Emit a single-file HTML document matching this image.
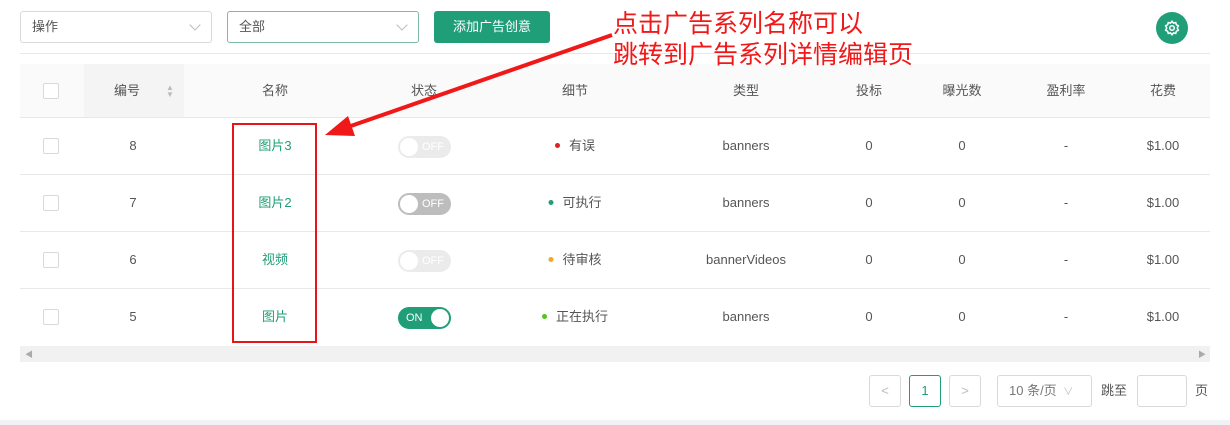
<!DOCTYPE html>
<html><head><meta charset="utf-8"><style>
*{box-sizing:border-box;margin:0;padding:0}
body{width:1230px;height:425px;background:#fff;font-family:"Liberation Sans","Noto Sans CJK SC",sans-serif;font-size:13px;color:#555;position:relative;overflow:hidden}
.a{position:absolute}
.sel{position:absolute;top:11px;height:32px;border:1px solid #d9d9d9;border-radius:3px;padding:0 11px;line-height:30px;font-size:13px;color:#555}
.sel i{position:absolute;right:12px;top:9px;width:8px;height:8px;border-right:1px solid #bbb;border-bottom:1px solid #bbb;transform:rotate(45deg)}
.c{position:absolute;text-align:center;transform:translateX(-50%);white-space:nowrap;line-height:18px;height:18px}
.cb{position:absolute;left:43px;width:16px;height:16px;border:1px solid #d9d9d9;border-radius:2px;background:#fff}
.line{position:absolute;left:20px;width:1190px;height:1px;background:#e8e8e8}
.sw{position:absolute;left:398px;width:53px;height:22px;border-radius:11px;color:#fff;font-size:11px;line-height:22px}
.sw b{position:absolute;top:2px;width:18px;height:18px;border-radius:50%;background:#fff}
.dot{display:inline-block;width:5px;height:5px;border-radius:50%;margin-right:9px;vertical-align:middle;position:relative;top:-1px}
.pg{position:absolute;top:375px;height:32px;border:1px solid #d9d9d9;border-radius:3px;text-align:center;line-height:30px;color:#bbb}
</style></head><body>
<div class="sel" style="left:20px;width:192px">操作<i></i></div>
<div class="sel" style="left:227px;width:192px;border-color:#7fb9a8">全部<i></i></div>
<div class="a" style="left:434px;top:11px;width:116px;height:32px;background:#1f9e77;border-radius:3px;color:#fff;line-height:32px;text-align:center;font-size:13px">添加广告创意</div>
<div class="a" style="left:1156px;top:12px;width:32px;height:32px;border-radius:50%;background:#1f9e77"></div>
<svg class="a" style="left:1163px;top:19px" width="18" height="18" viewBox="0 0 24 24" fill="none" stroke="#fff" stroke-width="2"><circle cx="12" cy="12" r="3"/><path d="M12 3l2 2.5 3-.8.8 3L20.5 9 19 12l1.5 3-2.7 1.3-.8 3-3-.8L12 21l-2-2.5-3 .8-.8-3L3.5 15 5 12 3.5 9l2.7-1.3.8-3 3 .8z"/></svg>
<div class="line" style="top:53px"></div>
<div class="a" style="left:20px;top:64px;width:1190px;height:54px;background:#fafafa"></div>
<div class="a" style="left:84px;top:64px;width:100px;height:54px;background:#f4f4f4"></div>
<div class="cb" style="top:83px"></div>
<div class="c" style="left:127px;top:82px">编号</div>
<div class="a" style="left:166px;top:84px;font-size:8px;color:#bbb;line-height:7px">▲<br>▼</div>
<div class="c" style="left:275px;top:82px">名称</div>
<div class="c" style="left:424px;top:82px">状态</div>
<div class="c" style="left:575px;top:82px">细节</div>
<div class="c" style="left:746px;top:82px">类型</div>
<div class="c" style="left:869px;top:82px">投标</div>
<div class="c" style="left:962px;top:82px">曝光数</div>
<div class="c" style="left:1066px;top:82px">盈利率</div>
<div class="c" style="left:1163px;top:82px">花费</div>
<div class="line" style="top:117px"></div>
<div class="line" style="top:174px"></div>
<div class="line" style="top:231px"></div>
<div class="line" style="top:288px"></div>

<div class="cb" style="top:138px"></div><div class="c" style="left:133px;top:137px">8</div>
<div class="c" style="left:275px;top:137px;color:#1f9e77">图片3</div>
<div class="sw" style="top:136px;background:#ebebeb"><b style="left:2px"></b><span style="position:absolute;left:24px">OFF</span></div>
<div class="c" style="left:575px;top:137px"><span class="dot" style="background:#e02020"></span>有误</div>
<div class="c" style="left:746px;top:137px">banners</div><div class="c" style="left:869px;top:137px">0</div><div class="c" style="left:962px;top:137px">0</div><div class="c" style="left:1066px;top:137px">-</div><div class="c" style="left:1163px;top:137px">$1.00</div>

<div class="cb" style="top:195px"></div><div class="c" style="left:133px;top:194px">7</div>
<div class="c" style="left:275px;top:194px;color:#1f9e77">图片2</div>
<div class="sw" style="top:193px;background:#bdbdbd"><b style="left:2px"></b><span style="position:absolute;left:24px">OFF</span></div>
<div class="c" style="left:575px;top:194px"><span class="dot" style="background:#1f9e77"></span>可执行</div>
<div class="c" style="left:746px;top:194px">banners</div><div class="c" style="left:869px;top:194px">0</div><div class="c" style="left:962px;top:194px">0</div><div class="c" style="left:1066px;top:194px">-</div><div class="c" style="left:1163px;top:194px">$1.00</div>

<div class="cb" style="top:252px"></div><div class="c" style="left:133px;top:251px">6</div>
<div class="c" style="left:275px;top:251px;color:#1f9e77">视频</div>
<div class="sw" style="top:250px;background:#ebebeb"><b style="left:2px"></b><span style="position:absolute;left:24px">OFF</span></div>
<div class="c" style="left:575px;top:251px"><span class="dot" style="background:#f5a623"></span>待审核</div>
<div class="c" style="left:746px;top:251px">bannerVideos</div><div class="c" style="left:869px;top:251px">0</div><div class="c" style="left:962px;top:251px">0</div><div class="c" style="left:1066px;top:251px">-</div><div class="c" style="left:1163px;top:251px">$1.00</div>

<div class="cb" style="top:309px"></div><div class="c" style="left:133px;top:308px">5</div>
<div class="c" style="left:275px;top:308px;color:#1f9e77">图片</div>
<div class="sw" style="top:307px;background:#1f9e77"><b style="left:33px"></b><span style="position:absolute;left:8px">ON</span></div>
<div class="c" style="left:575px;top:308px"><span class="dot" style="background:#52c41a"></span>正在执行</div>
<div class="c" style="left:746px;top:308px">banners</div><div class="c" style="left:869px;top:308px">0</div><div class="c" style="left:962px;top:308px">0</div><div class="c" style="left:1066px;top:308px">-</div><div class="c" style="left:1163px;top:308px">$1.00</div>

<div class="a" style="left:20px;top:346px;width:1190px;height:16px;background:#f1f1f1"></div>
<div class="a" style="left:25px;top:349px;font-size:8px;color:#aaa">◀</div>
<div class="a" style="left:1198px;top:349px;font-size:8px;color:#aaa">▶</div>

<div class="pg" style="left:869px;width:32px">&lt;</div>
<div class="pg" style="left:909px;width:32px;border-color:#1f9e77;color:#1f9e77">1</div>
<div class="pg" style="left:949px;width:32px">&gt;</div>
<div class="pg" style="left:997px;width:95px;color:#777;text-align:left;padding-left:11px">10 条/页 <span style="color:#bbb;font-size:10px;margin-left:3px">∨</span></div>
<div class="a" style="left:1101px;top:382px;line-height:18px">跳至</div>
<div class="pg" style="left:1137px;width:50px"></div>
<div class="a" style="left:1195px;top:382px;line-height:18px">页</div>
<div class="a" style="left:0;top:420px;width:1230px;height:5px;background:#f0f2f5"></div>

<div class="a" style="left:232px;top:123px;width:85px;height:220px;border:2px solid #e8141a"></div>
<svg class="a" style="left:0;top:0" width="1230" height="425"><line x1="612" y1="35" x2="345" y2="128" stroke="#f01818" stroke-width="4"/><polygon points="325,135 348,116 355,136" fill="#f01818"/></svg>
<div class="a" style="left:613px;top:7px;font-size:25px;line-height:31px;color:#f01818;font-family:'Noto Sans CJK SC',sans-serif">点击广告系列名称可以<br>跳转到广告系列详情编辑页</div>
</body></html>
